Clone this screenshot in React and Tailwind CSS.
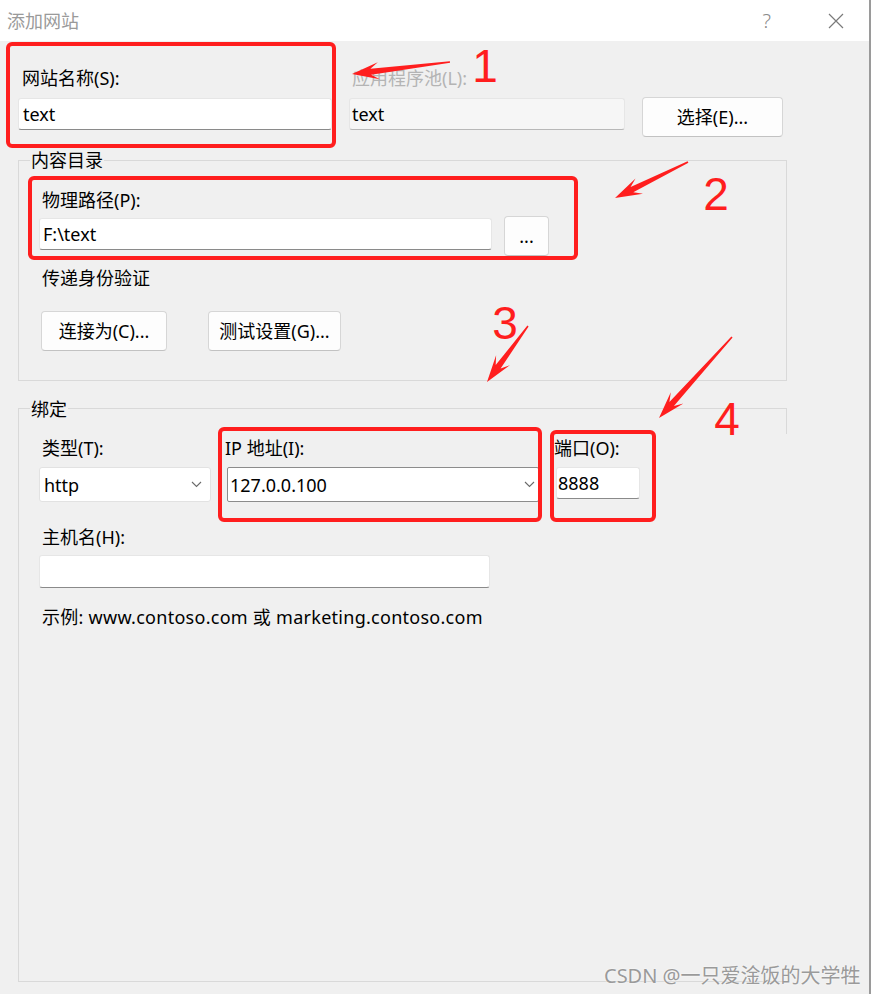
import React from 'react';

const RED = '#ff1e1e';

function arrowPts(x1, y1, x2, y2, h = 27, hw = 8.5, sw = 3, tw = 0.8) {
  const dx = x2 - x1, dy = y2 - y1, L = Math.hypot(dx, dy);
  const ux = dx / L, uy = dy / L, nx = -uy, ny = ux;
  const bx = x2 - ux * h * 0.7, by = y2 - uy * h * 0.7;
  const kx = x2 - ux * h, ky = y2 - uy * h;
  const p = [
    [x1 + nx * tw, y1 + ny * tw],
    [bx + nx * sw, by + ny * sw],
    [kx + nx * hw, ky + ny * hw],
    [x2, y2],
    [kx - nx * hw, ky - ny * hw],
    [bx - nx * sw, by - ny * sw],
    [x1 - nx * tw, y1 - ny * tw],
  ];
  return p.map((q) => q[0].toFixed(1) + ',' + q[1].toFixed(1)).join(' ');
}

function Chevron() {
  return (
    <svg width="11" height="7" viewBox="0 0 11 7" className="shrink-0">
      <path d="M1 1l4.5 4.5L10 1" stroke="#6a6a6a" strokeWidth="1.1" fill="none" />
    </svg>
  );
}

function Overlay() {
  const boxes = [
    [8, 44, 326, 102],
    [30, 178, 546, 80],
    [220, 429, 320, 91],
    [552, 432, 102, 88],
  ];
  const arrows = [
    [450, 62, 352, 74],
    [688, 162, 615, 198],
    [528, 326, 487, 382],
    [732, 337, 659, 418],
  ];
  const nums = [
    ['1', 485, 82],
    ['2', 716, 210],
    ['3', 505, 339],
    ['4', 727, 435],
  ];
  return (
    <svg className="absolute left-0 top-0 pointer-events-none" width="871" height="994" viewBox="0 0 871 994">
      {boxes.map((b, i) => (
        <rect key={i} x={b[0]} y={b[1]} width={b[2]} height={b[3]} rx="4" fill="none" stroke={RED} strokeWidth="4" />
      ))}
      {arrows.map((a, i) => (
        <polygon key={i} points={arrowPts(a[0], a[1], a[2], a[3])} fill={RED} />
      ))}
      {nums.map((n, i) => (
        <text key={i} x={n[1]} y={n[2]} textAnchor="middle" fill={RED} fontSize="46" fontFamily="'Liberation Sans', sans-serif">
          {n[0]}
        </text>
      ))}
    </svg>
  );
}

const inputCls = 'bg-white border border-[#e6e6e6] border-b-[#8a8a8a] rounded-[3px] flex items-center';
const btnCls = 'bg-[#fdfdfd] border border-[#d6d6d6] border-b-[#c2c2c2] rounded-[4px] flex items-center justify-center';

export default function App() {
  return (
    <div className="relative w-[871px] h-[994px] bg-[#f0f0f0] overflow-hidden border-r-2 border-[#9a9a9a] font-['Noto_Sans','Noto_Sans_CJK_SC',sans-serif] text-[18px] leading-[24px] text-black">
      {/* title bar */}
      <div className="h-[41px] bg-white flex items-center">
        <span className="ml-[7px] text-[18px] text-[#9a9a9a]">添加网站</span>
        <span className="ml-auto text-[20px] text-[#8a8a8a] font-light">?</span>
        <svg width="16" height="16" viewBox="0 0 16 16" className="ml-[57px] mr-[25px]">
          <path d="M1 1L15 15M15 1L1 15" stroke="#7a7a7a" strokeWidth="1.2" />
        </svg>
      </div>

      {/* row 1 */}
      <div className="flex mt-[25px] ml-[18px]">
        <div className="w-[314px]">
          <div className="pl-[4px]">网站名称(S):</div>
          <div className={inputCls + ' mt-[8px] h-[32px] pl-[4px]'}>text</div>
        </div>
        <div className="w-[276px] ml-[17px]">
          <div className="pl-[3px] text-[#b4b4b4]">应用程序池(L):</div>
          <div className="mt-[8px] h-[32px] pl-[2px] bg-[#f6f6f6] border border-[#e6e6e6] border-b-[#b8b8b8] rounded-[3px] flex items-center">text</div>
        </div>
        <div className={btnCls + ' ml-[17px] mt-[31px] w-[141px] h-[40px]'}>选择(E)...</div>
      </div>

      {/* group 1 */}
      <div className="relative mt-[23px] ml-[18px] w-[769px] h-[221px] border border-[#d9d9d9]">
        <span className="absolute left-[11px] top-[-13px] px-[1px] bg-[#f0f0f0]">内容目录</span>
        <div className="pt-[27px] pl-[23px]">物理路径(P):</div>
        <div className="flex items-start mt-[4px] ml-[20px]">
          <div className={inputCls + ' mt-[2px] w-[453px] h-[32px] pl-[3px]'}>F:\text</div>
          <div className={btnCls + ' ml-[12px] w-[45px] h-[40px]'}>...</div>
        </div>
        <div className="mt-[10px] pl-[23px]">传递身份验证</div>
        <div className="flex mt-[21px] ml-[22px]">
          <div className={btnCls + ' w-[126px] h-[40px]'}>连接为(C)...</div>
          <div className={btnCls + ' ml-[41px] w-[133px] h-[40px]'}>测试设置(G)...</div>
        </div>
      </div>

      {/* group 2 */}
      <div className="relative mt-[27px] ml-[18px] w-[769px] h-[574px] border-l border-t border-b border-[#d9d9d9]">
        <span className="absolute right-0 top-0 w-px h-[25px] bg-[#d9d9d9]" />
        <span className="absolute left-[11px] top-[-12px] px-[1px] bg-[#f0f0f0]">绑定</span>
        <div className="flex pt-[27px] ml-[20px]">
          <div className="w-[172px]">
            <div className="pl-[3px]">类型(T):</div>
            <div className="mt-[7px] h-[35px] bg-white border border-[#e2e2e2] rounded-[3px] flex items-center justify-between pl-[4px] pr-[8px]">
              <span>http</span>
              <Chevron />
            </div>
          </div>
          <div className="w-[312px] ml-[16px]">
            <div className="-ml-[2px]">IP 地址(I):</div>
            <div className="mt-[7px] h-[35px] bg-white border border-[#8c8c8c] rounded-[2px] flex items-center justify-between pl-[2px] pr-[3px]">
              <span>127.0.0.100</span>
              <Chevron />
            </div>
          </div>
          <div className="w-[84px] ml-[17px]">
            <div className="-ml-[2px]">端口(O):</div>
            <div className={inputCls + ' mt-[7px] h-[32px] pl-[1px]'}>8888</div>
          </div>
        </div>
        <div className="mt-[23px] pl-[23px]">主机名(H):</div>
        <div className={inputCls + ' mt-[6px] ml-[20px] w-[451px] h-[33px]'}></div>
        <div className="mt-[17px] pl-[23px] tracking-[0.27px]">示例: www.contoso.com 或 marketing.contoso.com</div>
      </div>

      {/* watermark */}
      <div className="absolute left-[604px] top-[963px] text-[20px] leading-[26px] text-[#9a9a9a] [text-shadow:0_0_2px_#fff]">
        CSDN @一只爱淦饭的大学牲
      </div>

      <Overlay />
    </div>
  );
}
